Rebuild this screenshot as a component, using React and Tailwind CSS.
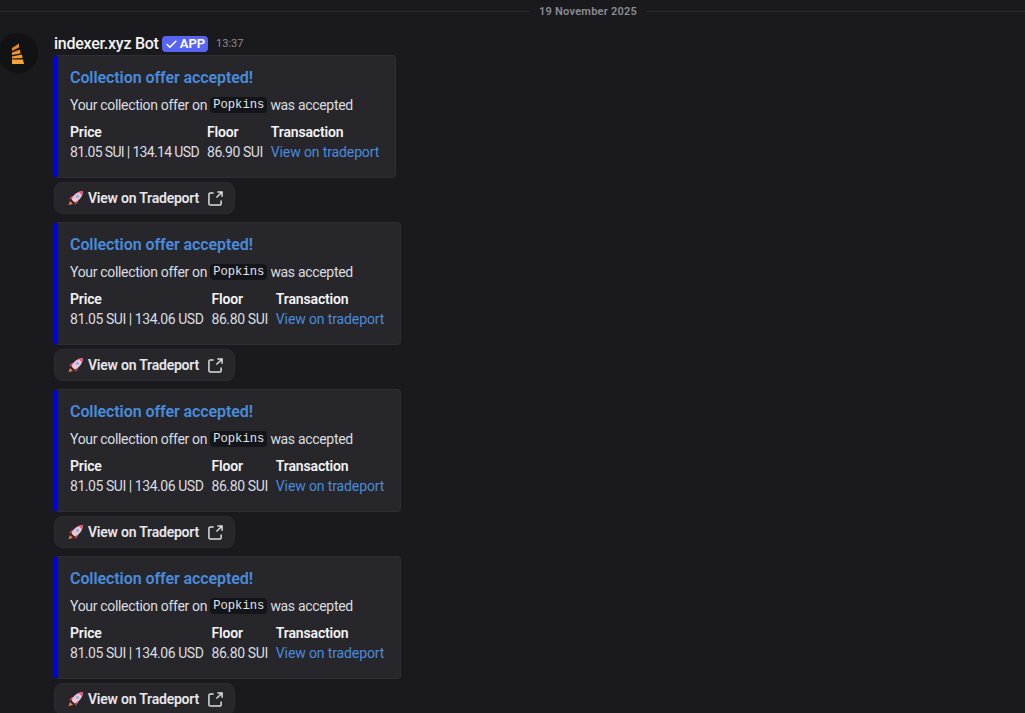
import { Check } from 'lucide-react';

const offers = [
  { price: '81.05 SUI | 134.14 USD', floor: '86.90 SUI', priceClass: 'tracking-[-0.65px]', floorClass: 'tracking-[-0.45px]' },
  { price: '81.05 SUI | 134.06 USD', floor: '86.80 SUI', priceClass: 'tracking-[-0.45px]', floorClass: 'tracking-[-0.38px]' },
  { price: '81.05 SUI | 134.06 USD', floor: '86.80 SUI', priceClass: 'tracking-[-0.45px]', floorClass: 'tracking-[-0.38px]' },
  { price: '81.05 SUI | 134.06 USD', floor: '86.80 SUI', priceClass: 'tracking-[-0.45px]', floorClass: 'tracking-[-0.38px]' },
];

function Logo() {
  return (
    <svg viewBox="0 0 40 40" className="w-10 h-10 shrink-0 -ml-[2px]">
      <circle cx="20" cy="20" r="20" fill="#111214" />
      <path d="M14 15 L21 10.5 L21 14.5 L14 18 Z" fill="#e8871e" />
      <path d="M14 19.5 L22 16.5 L22.5 20.5 L14 22 Z" fill="#f0902a" />
      <path d="M14 23.5 L24 21.5 L24.5 25 L14 25.5 Z" fill="#f59a30" />
      <path d="M14 26.5 L25 26.5 L26 31 L14 31 Z" fill="#f7a33a" />
    </svg>
  );
}

function Rocket() {
  return (
    <svg viewBox="0 0 16 16" className="w-4 h-4 shrink-0">
      <path d="M2 11 L0.5 15 L5 14 Z" fill="#f0803c" />
      <path d="M3 9 L1 9 L4 6 L6 6 Z" fill="#d8456a" />
      <path d="M7 13 L7 15 L10 12 L10 10 Z" fill="#d8456a" />
      <path d="M3.5 9.5 C5 5 9 1.5 15 1 C14.5 7 11 11 6.5 12.5 Z" fill="#f4c3d2" />
      <path d="M10.5 1.8 C12 1.3 14 1.1 15 1 C14.9 2 14.8 3.5 14.2 5.5 Z" fill="#e0557c" />
      <circle cx="9.5" cy="6.5" r="1.8" fill="#8fb8e6" />
    </svg>
  );
}

function ExternalLink() {
  return (
    <svg viewBox="0 0 16 16" className="w-[15px] h-[15px] shrink-0 text-[#dbdee1]" fill="none" stroke="currentColor" strokeWidth="1.6">
      <path d="M6 2 H2.5 A1.5 1.5 0 0 0 1 3.5 V13.5 A1.5 1.5 0 0 0 2.5 15 H12.5 A1.5 1.5 0 0 0 14 13.5 V10" />
      <path d="M9 7 L14.5 1.5 M10 1 H15 V6" />
    </svg>
  );
}

function Field({ name, children }) {
  return (
    <div className="flex flex-col text-sm leading-[20px]">
      <div className="font-semibold tracking-[-0.15px] text-[#f2f3f5]">{name}</div>
      <div className="text-[#dbdee1] whitespace-nowrap">{children}</div>
    </div>
  );
}

function Offer({ price, floor, priceClass, floorClass }) {
  return (
    <div className="flex flex-col items-start">
      <div className="w-fit h-[123px] rounded-[4px] border border-[#2e2f34] border-l-4 border-l-[#0000f0] bg-[#26262b] pl-3 pr-4 pt-[11px]">
        <div className="text-base leading-[22px] font-semibold tracking-[-0.08px] text-[#4a8cdb]">Collection offer accepted!</div>
        <div className="mt-[6px] flex items-center text-sm leading-[20px] tracking-[-0.32px] text-[#dbdee1]">
          Your collection offer on
          <code className="mx-[3px] rounded-[4px] bg-[#141518] px-[3px] text-[12.2px] leading-[16px] tracking-normal font-['Liberation_Mono',monospace] text-[#e4e5e8]">Popkins</code>
          was accepted
        </div>
        <div className="mt-[7px] flex gap-2">
          <Field name="Price"><span className={priceClass}>{price}</span></Field>
          <Field name="Floor"><span className={floorClass}>{floor}</span></Field>
          <Field name="Transaction">
            <span className="tracking-[-0.12px] text-[#4a8cdb]">View on tradeport</span>
          </Field>
        </div>
      </div>
      <button className="mt-1 flex h-8 w-[181px] items-center gap-1 rounded-lg border border-[#2b2c31] bg-[#26262b] pl-[13px] text-sm font-semibold tracking-[-0.22px] text-[#e6e7ea] whitespace-nowrap">
        <Rocket />
        <span>View on Tradeport</span>
        <span className="ml-[5px]"><ExternalLink /></span>
      </button>
    </div>
  );
}

export default function App() {
  return (
    <div className="h-[713px] w-[1025px] overflow-hidden bg-[#1a1a1e] font-['Roboto',sans-serif]">
      <div className="relative flex h-[23px] items-center">
        <div className="h-px w-full bg-[#2a2b30]" />
        <span className="absolute left-[530px] top-[5px] bg-[#1a1a1e] px-[9px] text-[11px] leading-[14px] font-semibold tracking-[0.25px] text-[#8b8d94] whitespace-nowrap">19 November 2025</span>
      </div>
      <div className="mt-[10px] flex gap-[16px]">
        <Logo />
        <div className="flex flex-col">
          <div className="flex h-[22px] items-center">
            <span className="text-base font-medium tracking-[-0.25px] text-[#f2f3f5]">indexer.xyz Bot</span>
            <span className="ml-[3px] flex h-4 items-center gap-[2px] rounded-[4px] bg-[#5865f2] px-[3px] text-[13px] font-semibold text-white">
              <Check size={13} strokeWidth={3} />
              APP
            </span>
            <span className="ml-2 text-[11px] text-[#8b8d94]">13:37</span>
          </div>
          <div className="flex flex-col gap-2">
            {offers.map((o, i) => (
              <Offer key={i} {...o} />
            ))}
          </div>
        </div>
      </div>
    </div>
  );
}
